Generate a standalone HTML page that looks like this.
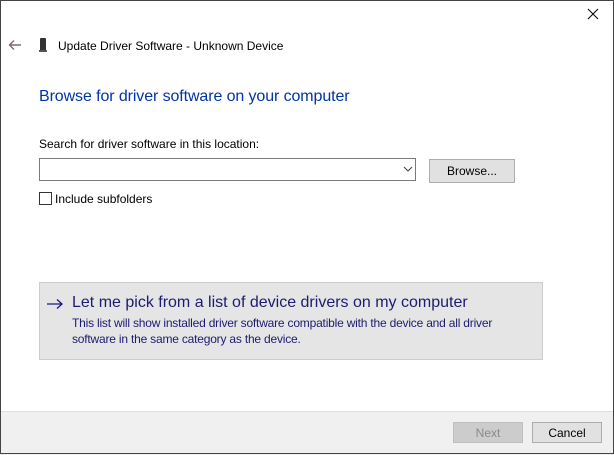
<!DOCTYPE html>
<html><head><meta charset="utf-8"><style>
body{margin:0;width:614px;height:454px;overflow:hidden;font-family:"Liberation Sans",sans-serif;background:#fff;position:relative;}
.a{position:absolute;white-space:nowrap;}
.btn{position:absolute;box-sizing:border-box;border:1px solid #adadad;background:#e1e1e1;font-size:12px;text-align:center;color:#000;}
</style></head><body>
<div class="a" style="left:0;top:411px;width:614px;height:43px;background:#f0f0f0;border-top:1px solid #dfdfdf"></div>
<div class="a" style="left:0;top:0;width:612px;height:452px;border:1px solid #444"></div>
<svg class="a" style="left:587px;top:8px" width="12" height="12"><path d="M1 1L11 11M11 1L1 11" stroke="#000" stroke-width="1"/></svg>
<svg class="a" style="left:8px;top:39px" width="14" height="12"><path d="M13 6H2M6 1.5L1.5 6L6 10.5" stroke="#7a6a74" stroke-width="1.4" fill="none"/></svg>
<div class="a" style="left:40px;top:38px;width:6px;height:13px;background:#333;border-radius:1px"></div>
<div class="a" style="left:39px;top:50px;width:8px;height:2px;background:#555"></div>
<div class="a" style="left:58px;top:39px;font-size:12px;color:#000">Update Driver Software - Unknown Device</div>
<div class="a" style="left:39px;top:88px;font-size:16px;color:#0035a3;letter-spacing:-0.1px">Browse for driver software on your computer</div>
<div class="a" style="left:39px;top:137px;font-size:12px;color:#000">Search for driver software in this location:</div>
<div class="a" style="left:39px;top:158px;width:377px;height:23px;box-sizing:border-box;border:1px solid #7a7a7a;background:#fff"></div>
<svg class="a" style="left:403px;top:166px" width="10" height="7"><path d="M1 1L5 5L9 1" stroke="#444" fill="none"/></svg>
<div class="btn" style="left:429px;top:159px;width:86px;height:24px;line-height:23px">Browse...</div>
<div class="a" style="left:39px;top:192px;width:13px;height:13px;box-sizing:border-box;border:1px solid #333;background:#fff"></div>
<div class="a" style="left:55px;top:192px;font-size:12px;color:#000">Include subfolders</div>
<div class="a" style="left:39px;top:282px;width:504px;height:78px;box-sizing:border-box;border:1px solid #ccc;background:#e5e5e5"></div>
<svg class="a" style="left:46px;top:298px" width="18" height="12"><path d="M1 6H16M11 1.5L16 6L11 10.5" stroke="#1c1c80" stroke-width="1.3" fill="none"/></svg>
<div class="a" style="left:72px;top:294px;font-size:16px;color:#1c1c70">Let me pick from a list of device drivers on my computer</div>
<div class="a" style="left:72px;top:315px;font-size:12px;line-height:16px;color:#1c1c70;letter-spacing:-0.2px">This list will show installed driver software compatible with the device and all driver<br>software in the same category as the device.</div>
<div class="btn" style="left:453px;top:422px;width:70px;height:21px;line-height:20px;color:#8a8a8a;border-color:#bfbfbf;background:#ccc">Next</div>
<div class="btn" style="left:532px;top:422px;width:70px;height:21px;line-height:20px">Cancel</div>
</body></html>
